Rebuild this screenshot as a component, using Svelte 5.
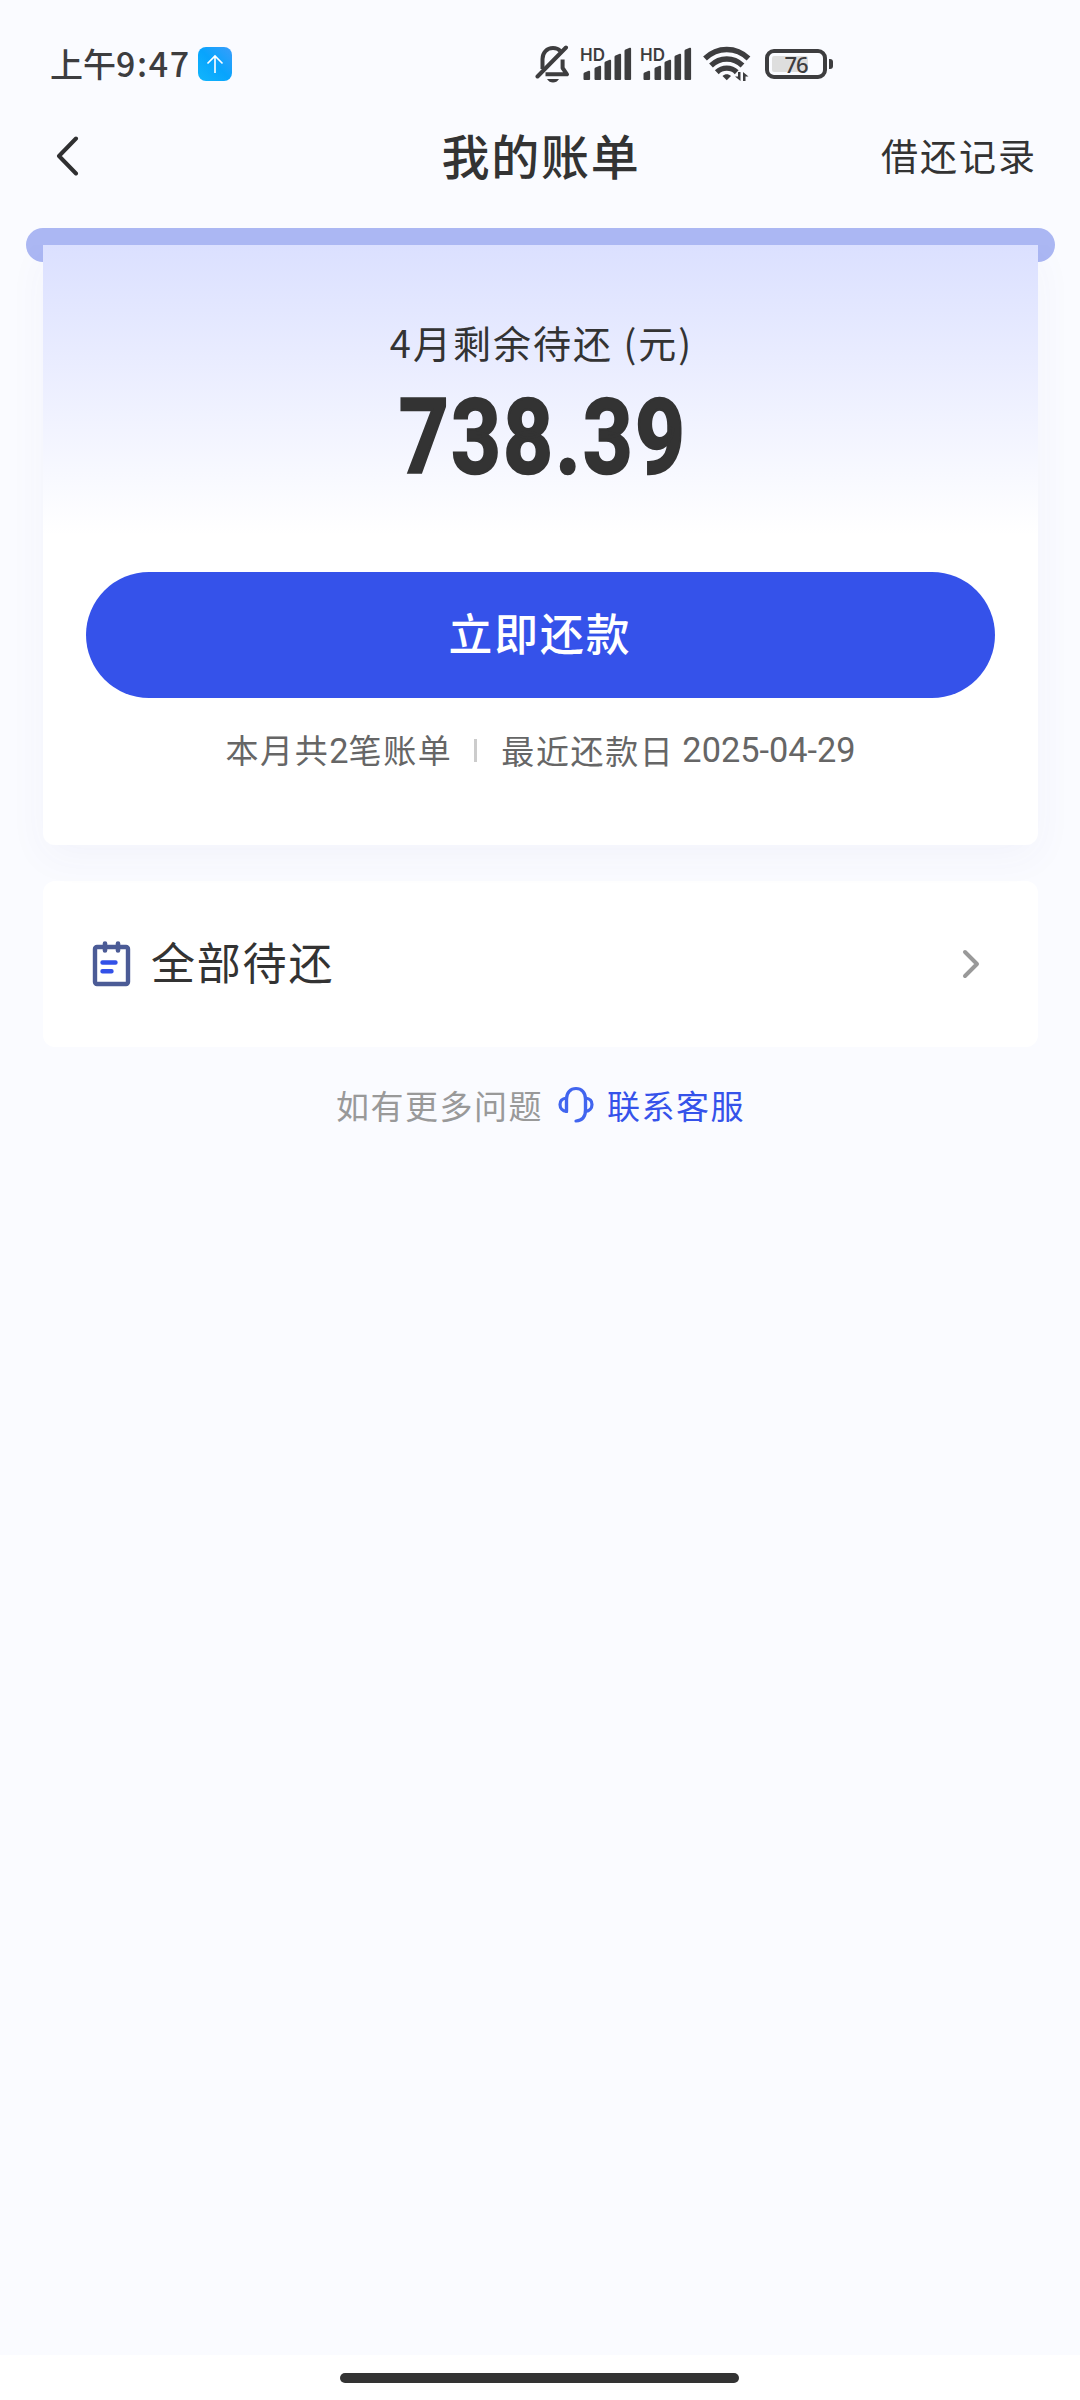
<script lang="ts">
  const signalBars = [
    { x: 2, top: 24 },
    { x: 13, top: 19 },
    { x: 23, top: 13 },
    { x: 33, top: 7 },
    { x: 43, top: 1 }
  ];

  const bill = {
    month: 4,
    amount: '738.39',
    count: 2,
    dueDate: '2025-04-29'
  };
</script>

<div class="page">
  <div class="status-bar">
    <span class="clock">上午<span class="time">9:47</span></span>
    <svg class="app-badge" width="34" height="34" viewBox="0 0 34 34">
      <defs>
        <linearGradient id="badge" x1="1" y1="0" x2="0" y2="1">
          <stop offset="0" stop-color="#3a9dfb" />
          <stop offset="0.5" stop-color="#08a4fd" />
          <stop offset="1" stop-color="#12b6fc" />
        </linearGradient>
      </defs>
      <rect width="34" height="34" rx="8" fill="url(#badge)" />
      <path d="M17 26V9M9.5 16.5L17 9l7.500 7.500" fill="none" stroke="#fff" stroke-width="1.600" />
    </svg>

    <div class="status-icons">
      <svg class="bell" width="36" height="40" viewBox="0 0 36 40" fill="none" stroke="#3d3d3f" stroke-width="4">
        <path d="M7.500 25V15C7.500 8.500 12 4 18 4c3 0 5.500 1 7.300 3" />
        <path d="M27.600 15.500V24l4.400 6.300H10.500" stroke-linejoin="round" />
        <path d="M2.500 32.500L31 3.500" stroke-linecap="round" />
        <path d="M12 35h12c-1.500 2.500-3.500 3.500-6 3.500s-4.500-1-6-3.500z" fill="#3d3d3f" stroke="none" />
      </svg>
      {#each [0, 1] as sim (sim)}
        <div class="signal">
          <span class="hd">HD</span>
          <svg width="51" height="34" viewBox="0 0 51 34" fill="#3d3d3f">
            {#each signalBars as bar (bar.x)}
              <path d="M{bar.x - 0.5} 32V{bar.top + 3}q0-1 1-1.400l4.200-1.800q1.400-.4 1.400 1V32q0 1-1 1h-4.600q-1 0-1-1z" />
            {/each}
          </svg>
        </div>
      {/each}
      <svg class="wifi" width="48" height="36" viewBox="0 0 48 36" fill="none" stroke="#3d3d3f" stroke-width="5.400">
        <path d="M2 12.500C14.500.5 33 .5 45.500 12.500" />
        <path d="M8 19.500c9-8.700 22.500-8.700 31.500 0" />
        <path d="M13.800 26.200c5.500-5.400 14.400-5.400 19.900 0" />
        <path d="M19.500 30c2.500-2.500 6-2.500 8.500 0l-4.250 4.300z" fill="#3d3d3f" stroke="none" />
        <path d="M37.500 26v9l-5.500-4.500h3V26zM40 35v-9l5.500 4.500h-3V35z" fill="#3d3d3f" stroke="none" />
      </svg>
      <div class="battery">
        <div class="battery-level"></div>
        <span class="battery-text">76</span>
      </div>
      <div class="battery-nub"></div>
    </div>
  </div>

  <header class="nav">
    <button class="back" aria-label="返回">
      <svg width="24" height="40" viewBox="0 0 24 40">
        <path d="M20 2.500L3 20l17 17.500" fill="none" stroke="#2f2f31" stroke-width="4" stroke-linecap="round" stroke-linejoin="round" />
      </svg>
    </button>
    <h1>我的账单</h1>
    <a class="records" href="#records">借还记录</a>
  </header>

  <main>
    <div class="slot">
      <section class="bill-card">
        <p class="bill-label">{bill.month}月剩余待还 (元)</p>
        <p class="bill-amount">{bill.amount}</p>
        <button class="pay">立即还款</button>
        <div class="bill-meta">
          <span>本月共<span class="num">{bill.count}</span>笔账单</span>
          <i class="divider"></i>
          <span>最近还款日</span>
          <span class="num date">{bill.dueDate}</span>
        </div>
      </section>
    </div>

    <a class="all-row" href="#all">
      <svg width="40" height="46" viewBox="0 0 40 46" fill="none">
        <rect x="3" y="6" width="33" height="37" rx="2" stroke="#4b5b96" stroke-width="4.400" />
        <path d="M13 2.500v7M26 2.500v7" stroke="#4b5b96" stroke-width="4.600" stroke-linecap="round" />
        <path d="M10.500 21.500h13M10.500 30.300h9" stroke="#3351e8" stroke-width="4.400" stroke-linecap="round" />
      </svg>
      <span class="all-label">全部待还</span>
      <svg class="chevron" width="20" height="32" viewBox="0 0 20 32">
        <path d="M4 4l12 12L4 28" fill="none" stroke="#999" stroke-width="4" stroke-linecap="round" stroke-linejoin="round" />
      </svg>
    </a>

    <div class="help">
      <span>如有更多问题</span>
      <svg width="36" height="38" viewBox="0 0 36 38" fill="none" stroke="#4165ef" stroke-width="3.200" stroke-linecap="round" stroke-linejoin="round">
        <path d="M8.500 25.500V13C8.500 6.500 12.500 2.500 18 2.500S27.500 6.500 27.500 13v11c0 7-3.500 10.500-9.500 11" />
        <path d="M8.500 12c-4 .5-6.500 3-6.500 6.500s2.500 6.500 6.500 7z" />
        <path d="M27.500 12c4 .5 6.500 3 6.500 6.500s-2.500 6.500-6.500 7z" />
      </svg>
      <a href="#service">联系客服</a>
    </div>
  </main>

  <div class="home-area">
    <div class="home-pill"></div>
  </div>
</div>

<style>
  :global(body) {
    margin: 0;
    background: #fafbff;
  }

  .page {
    display: flex;
    flex-direction: column;
    width: 1080px;
    height: 2400px;
    overflow: hidden;
    background: #fafbff;
    font-family: 'Noto Sans CJK SC', sans-serif;
    color: #333;
  }

  p,
  h1 {
    margin: 0;
    font-weight: 400;
  }

  a {
    color: inherit;
    text-decoration: none;
  }

  button {
    padding: 0;
    border: none;
    background: none;
    font-family: inherit;
  }

  svg {
    display: block;
    flex: none;
  }

  span {
    white-space: nowrap;
  }

  /* Status bar */
  .status-bar {
    display: flex;
    align-items: center;
    height: 82px;
    padding: 23px 0 5px 50px;
    flex: none;
    color: #3d3d3f;
  }

  .clock {
    width: 148px;
    padding-bottom: 2px;
    font-size: 33px;
    font-weight: 500;
    line-height: 40px;
  }

  .time {
    font-size: 34px;
    letter-spacing: 1.600px;
  }

  .status-icons {
    display: flex;
    align-items: center;
    margin-left: 303px;
  }

  .signal {
    position: relative;
    width: 51px;
    margin-right: 9px;
  }

  .bell {
    margin-right: 11px;
  }

  .hd {
    position: absolute;
    left: -2px;
    top: -1px;
    font-family: Inter, sans-serif;
    font-size: 17px;
    font-weight: 600;
    line-height: 18px;
  }

  .wifi {
    margin-left: 1px;
  }

  .battery {
    display: flex;
    align-items: center;
    justify-content: center;
    position: relative;
    width: 54px;
    height: 22px;
    margin-left: 14px;
    border: 4px solid #3d3d3f;
    border-radius: 9px;
  }

  .battery-level {
    position: absolute;
    left: 3px;
    top: 3px;
    width: 36px;
    height: 16px;
    border-radius: 2px;
    background: #dedede;
  }

  .battery-text {
    position: relative;
    font-family: 'Noto Sans', sans-serif;
    font-size: 22px;
    font-weight: 500;
    letter-spacing: -1px;
    line-height: 22px;
  }

  .battery-nub {
    width: 4px;
    height: 10px;
    margin-left: 2px;
    border-radius: 0 3px 3px 0;
    background: #3d3d3f;
  }

  /* Title row */
  .nav {
    display: grid;
    grid-template-columns: 1fr auto 1fr;
    align-items: center;
    flex: none;
    height: 92px;
    padding: 0 43px 0 56px;
  }

  .back {
    width: 24px;
  }

  h1 {
    padding: 0 11px 4px 0;
    font-size: 48px;
    font-weight: 500;
    line-height: 60px;
    letter-spacing: 1.8px;
  }

  .records {
    justify-self: end;
    padding-bottom: 3px;
    font-size: 37px;
    line-height: 48px;
    letter-spacing: 2px;
  }

  main {
    flex: 1;
    padding: 26px 25px 0 26px;
  }

  /* Slot that the bill slides out of */
  .slot {
    height: 34px;
    padding: 17px 17px 0;
    border-radius: 17px;
    box-sizing: border-box;
    background: #abb7f3;
  }

  .bill-card {
    display: flex;
    flex-direction: column;
    align-items: center;
    height: 600px;
    border-radius: 0 0 12px 12px;
    background: linear-gradient(#dbe0ff 0, #fff 290px);
    box-shadow: 0 12px 40px rgba(60, 70, 160, 0.045);
    clip-path: inset(0 -60px -60px -60px);
  }

  .bill-label {
    margin-top: 73px;
    padding-left: 2px;
    font-size: 38px;
    line-height: 48px;
    letter-spacing: 2px;
  }

  .bill-amount {
    margin-top: 12px;
    padding-left: 6px;
    height: 120px;
    font-family: Roboto, sans-serif;
    font-size: 103px;
    font-weight: 700;
    line-height: 120px;
    letter-spacing: 3px;
    transform: scaleX(0.84);
    -webkit-text-stroke: 2.500px #333;
  }

  .pay {
    width: 909px;
    height: 126px;
    margin: 74px 1px 0 0;
    padding-bottom: 7px;
    border-radius: 63px;
    background: #3552ea;
    color: #fff;
    font-size: 43.8px;
    font-weight: 500;
    letter-spacing: 2px;
  }

  .bill-meta {
    display: flex;
    align-items: center;
    margin-top: 27px;
    color: #666;
    font-size: 33px;
    line-height: 48px;
    letter-spacing: 1.600px;
  }

  .num {
    font-family: Roboto, sans-serif;
    font-size: 34.3px;
    letter-spacing: 0;
  }

  .date {
    margin-left: 8px;
  }

  .divider {
    width: 3px;
    height: 23px;
    margin: 0 24px 0 22px;
    background: #ccc;
  }

  .all-row {
    display: flex;
    align-items: center;
    height: 166px;
    margin: 619px 17px 0;
    padding: 0 57px 0 49px;
    box-sizing: border-box;
    border-radius: 12px;
    background: #fff;
  }

  .all-label {
    margin-left: 19px;
    padding-bottom: 7px;
    font-size: 44px;
    line-height: 60px;
    letter-spacing: 1.8px;
  }

  .chevron {
    margin-left: auto;
  }

  .help {
    display: flex;
    align-items: center;
    justify-content: center;
    margin-top: 34px;
    color: #999;
    font-size: 33px;
    line-height: 48px;
    letter-spacing: 1.500px;
  }

  .help svg {
    margin: 0 13px 0 15px;
  }

  .help a {
    color: #3552ea;
  }

  /* System gesture bar */
  .home-area {
    display: flex;
    justify-content: center;
    flex: none;
    height: 45px;
    padding-right: 1px;
    background: #fff;
  }

  .home-pill {
    width: 399px;
    height: 10px;
    margin-top: 18px;
    border-radius: 5px;
    background: #333;
  }
</style>
